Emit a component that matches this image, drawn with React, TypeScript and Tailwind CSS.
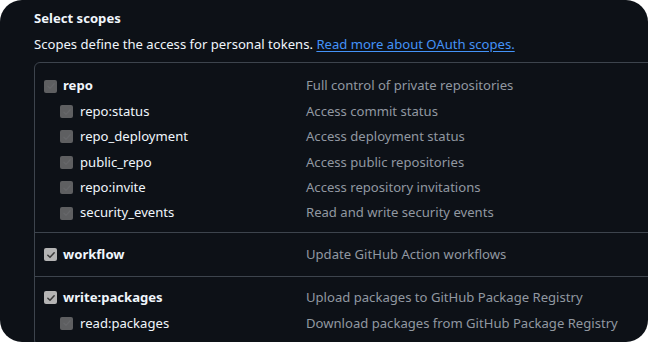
const groups = [
  [
    { name: 'repo', desc: 'Full control of private repositories', parent: true, checked: false },
    { name: 'repo:status', desc: 'Access commit status' },
    { name: 'repo_deployment', desc: 'Access deployment status' },
    { name: 'public_repo', desc: 'Access public repositories' },
    { name: 'repo:invite', desc: 'Access repository invitations' },
    { name: 'security_events', desc: 'Read and write security events' },
  ],
  [{ name: 'workflow', desc: 'Update GitHub Action workflows', parent: true, checked: true }],
  [
    { name: 'write:packages', desc: 'Upload packages to GitHub Package Registry', parent: true, checked: true },
    { name: 'read:packages', desc: 'Download packages from GitHub Package Registry' },
  ],
];

type Scope = { name: string; desc: string; parent?: boolean; checked?: boolean };

function Box({ checked }: { checked?: boolean }) {
  if (checked) {
    return (
      <span className="flex h-[13px] w-[13px] shrink-0 items-center justify-center rounded-[2px] bg-[#b4b4b4]">
        <svg viewBox="0 0 12 12" className="h-[10px] w-[10px]" fill="none">
          <path d="M2.2 6.3 4.8 8.8 9.8 3.3" stroke="#3a3a3a" strokeWidth="1.8" strokeLinecap="round" strokeLinejoin="round" />
        </svg>
      </span>
    );
  }
  return (
    <span className="flex h-[13px] w-[13px] shrink-0 items-center justify-center rounded-[2px] bg-[#5e5f61]">
      <svg viewBox="0 0 12 12" className="h-[10px] w-[10px]" fill="none">
        <path d="M2.2 6.3 4.8 8.8 9.8 3.3" stroke="#66676a" strokeWidth="1.6" strokeLinecap="round" strokeLinejoin="round" />
      </svg>
    </span>
  );
}

function Row({ s }: { s: Scope }) {
  return (
    <div className="flex h-[25.4px] items-center">
      <div className={s.parent ? 'flex w-[272px] items-center gap-[6px] pl-[9px]' : 'flex w-[272px] items-center gap-[7px] pl-[25px]'}>
        <Box checked={s.checked} />
        <span className={s.parent ? 'font-bold text-[#f0f6fc]' : 'text-[#f0f6fc]'}>{s.name}</span>
      </div>
      <span className="-ml-px text-[#9198a1]">{s.desc}</span>
    </div>
  );
}

export default function App() {
  return (
    <div className="h-[342px] w-[648px] bg-white">
      <div
        className="h-[342px] w-[648px] overflow-hidden rounded-[22px] bg-[#0d1117] pl-[34px] text-[13.1px]"
        style={{ fontFamily: '"Segoe UI", "Noto Sans", sans-serif' }}
      >
        <div className="flex h-[32px] items-end pb-[4px] font-bold leading-5 text-[#f0f6fc]">Select scopes</div>
        <div className="flex h-[24px] items-center leading-5 text-[#f0f6fc]">
          Scopes define the access for personal tokens.&nbsp;
          <span className="text-[#4493f8] underline underline-offset-2">Read more about OAuth scopes.</span>
        </div>
        <div className="mt-[6px] w-[640px] rounded-md border border-[#3d444d]">
          {groups.map((g, i) => (
            <div key={i} className={i === 0 ? 'pt-[10.5px] pb-[6.5px]' : 'border-t border-[#3d444d] py-[8.5px]'}>
              {g.map((s) => (
                <Row key={s.name} s={s} />
              ))}
            </div>
          ))}
        </div>
      </div>
    </div>
  );
}
